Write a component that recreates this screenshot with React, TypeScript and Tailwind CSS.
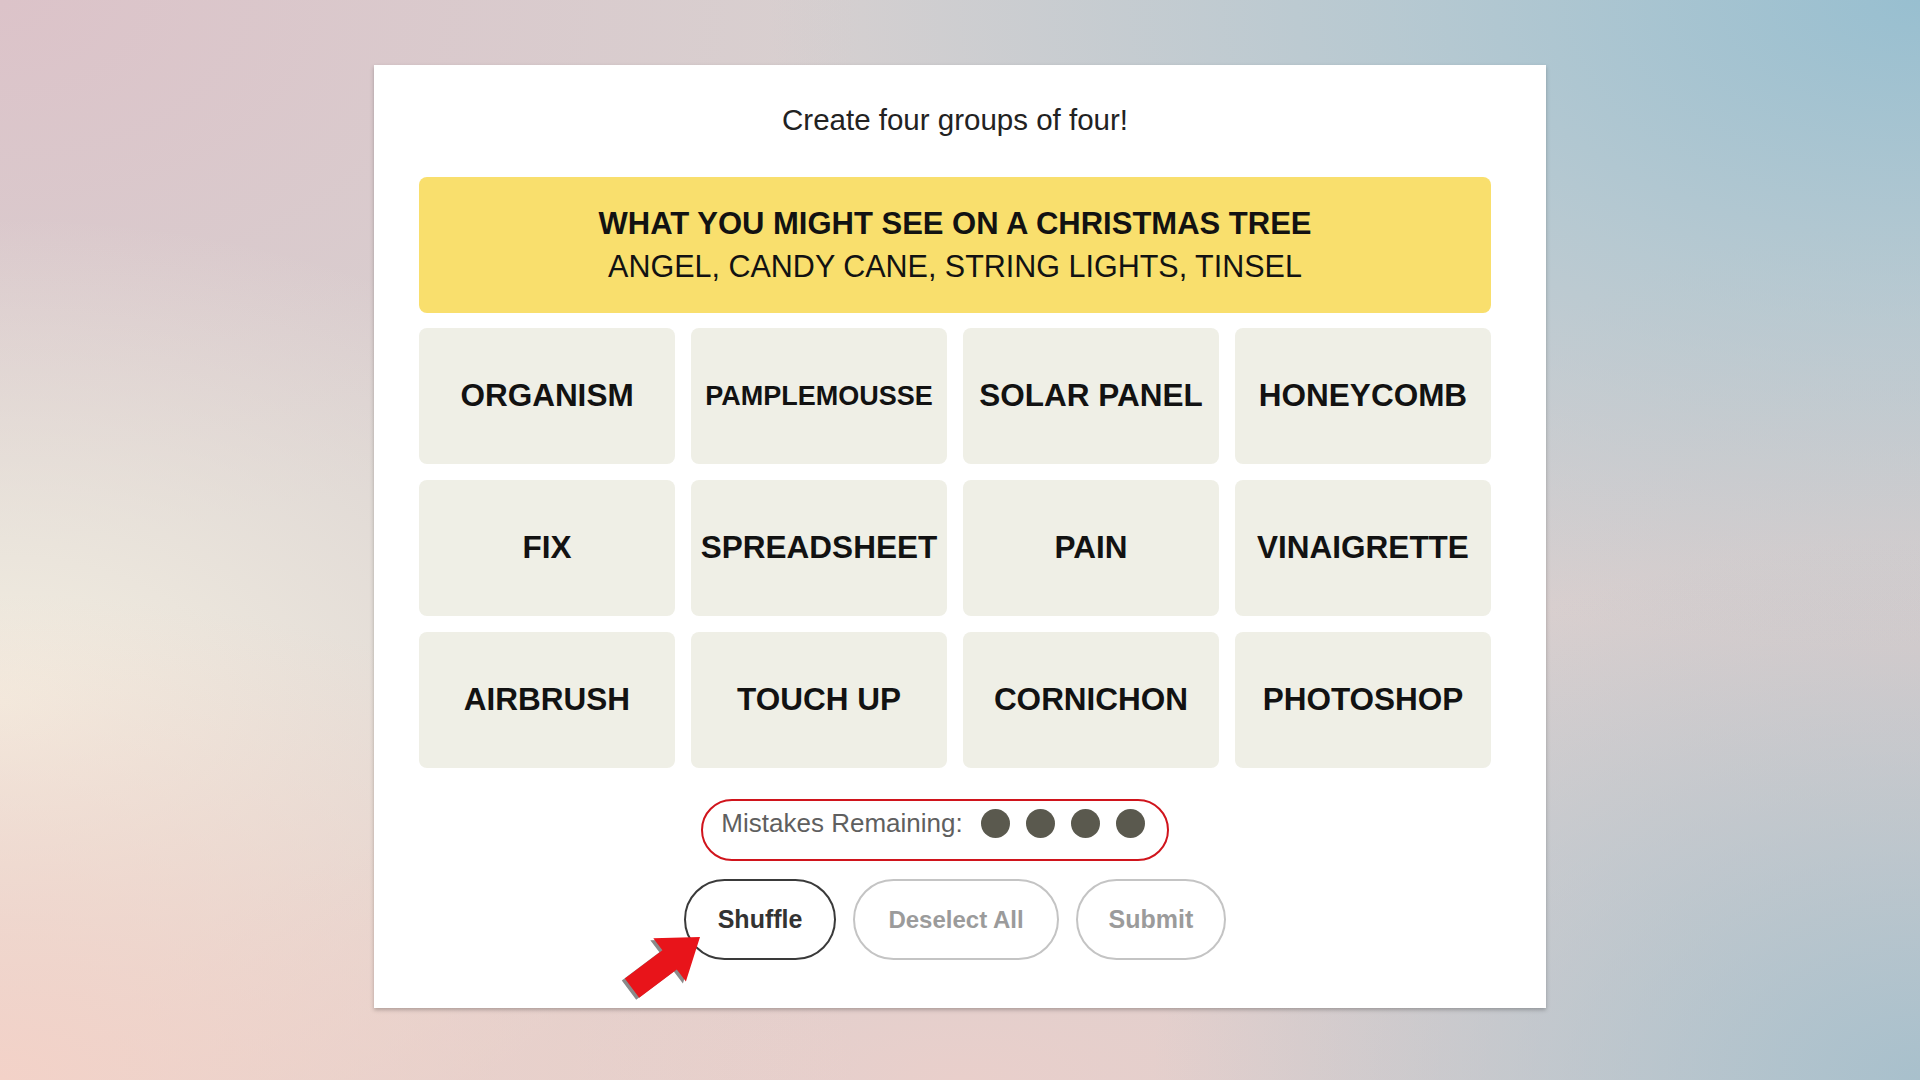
import React from "react";

const rows: { text: string; small?: boolean }[][] = [
  [{ text: "ORGANISM" }, { text: "PAMPLEMOUSSE", small: true }, { text: "SOLAR PANEL" }, { text: "HONEYCOMB" }],
  [{ text: "FIX" }, { text: "SPREADSHEET" }, { text: "PAIN" }, { text: "VINAIGRETTE" }],
  [{ text: "AIRBRUSH" }, { text: "TOUCH UP" }, { text: "CORNICHON" }, { text: "PHOTOSHOP" }],
];

function Arrow() {
  const pts = "85,12 70.9,56.5 61.8,44.5 24.2,72.8 9.8,53.6 47.4,25.3 38.3,13.3";
  return (
    <svg
      className="absolute left-[615px] top-[925px]"
      width="95"
      height="85"
      viewBox="0 0 95 85"
    >
      <polygon points={pts} fill="#8a8a8a" transform="translate(-3,2)" />
      <polygon points={pts} fill="#e8141a" />
    </svg>
  );
}

export default function App() {
  return (
    <div
      className="relative w-[1920px] h-[1080px] overflow-hidden flex justify-center pt-[65px] bg-[#d8d0d0] bg-[radial-gradient(ellipse_60%_60%_at_100%_0%,#98bfd0_0%,rgba(160,196,210,0.6)_45%,rgba(160,196,210,0)_100%),radial-gradient(ellipse_40%_50%_at_100%_100%,#a8c0cc_0%,rgba(168,192,204,0)_100%),radial-gradient(ellipse_45%_45%_at_0%_100%,#f3d2c8_0%,rgba(243,210,200,0)_100%),radial-gradient(ellipse_45%_30%_at_50%_100%,#e9cfcb_0%,rgba(233,207,203,0)_100%),radial-gradient(ellipse_40%_45%_at_0%_65%,#f3eee1_0%,rgba(243,238,225,0)_100%),radial-gradient(ellipse_45%_50%_at_0%_0%,#dcc3c9_0%,rgba(220,195,201,0)_100%),radial-gradient(ellipse_30%_40%_at_100%_60%,#dacdcc_0%,rgba(218,205,204,0)_100%)]"
      style={{ fontFamily: '"Liberation Sans", Arial, sans-serif' }}
    >
      <div className="w-[1172px] h-[943px] bg-white shadow-[0_2px_4px_rgba(0,0,0,0.25)] flex flex-col items-center pt-[37px] pr-[10px]">
        <div className="h-[36px] leading-[36px] text-[29.5px] text-[#222222]">
          Create four groups of four!
        </div>

        <div className="mt-[39px] w-[1072px] h-[136px] rounded-[8px] bg-[#f9df6d] flex flex-col items-center justify-center">
          <div className="text-[31px] leading-[43px] font-bold text-[#121212]">
            WHAT YOU MIGHT SEE ON A CHRISTMAS TREE
          </div>
          <div className="text-[30.5px] leading-[43px] text-[#121212]">
            ANGEL, CANDY CANE, STRING LIGHTS, TINSEL
          </div>
        </div>

        <div className="mt-[15px] w-[1072px] grid grid-cols-4 gap-[16px]">
          {rows.flat().map((t) => (
            <div
              key={t.text}
              className="h-[136px] rounded-[8px] bg-[#efefe6] flex items-center justify-center"
            >
              <span
                className={
                  t.small
                    ? "text-[27px] font-bold text-[#121212]"
                    : "text-[31.5px] font-bold text-[#121212]"
                }
              >
                {t.text}
              </span>
            </div>
          ))}
        </div>

        <div className="mt-[31px] mr-[40px] h-[62px] rounded-full border-2 border-[#d0141c] pl-[18px] pr-[22px] pt-[8px] flex items-start">
          <div className="h-[29px] flex items-center">
            <span className="text-[26px] leading-[29px] text-[#5f5f5f]">
              Mistakes Remaining:
            </span>
            <div className="ml-[18px] flex gap-[16px]">
              <span className="w-[29px] h-[29px] rounded-full bg-[#5a594e]" />
              <span className="w-[29px] h-[29px] rounded-full bg-[#5a594e]" />
              <span className="w-[29px] h-[29px] rounded-full bg-[#5a594e]" />
              <span className="w-[29px] h-[29px] rounded-full bg-[#5a594e]" />
            </div>
          </div>
        </div>

        <div className="mt-[18px] flex gap-[17px]">
          <button className="h-[81px] px-[32px] rounded-full border-2 border-[#3a3a3a] bg-white text-[25px] font-bold text-[#333333]">
            Shuffle
          </button>
          <button className="h-[81px] px-[33px] rounded-full border-2 border-[#c4c4c4] bg-white text-[24px] font-bold text-[#9b9b9b]">
            Deselect All
          </button>
          <button className="h-[81px] px-[31px] rounded-full border-2 border-[#c4c4c4] bg-white text-[25px] font-bold text-[#9b9b9b]">
            Submit
          </button>
        </div>
      </div>
      <Arrow />
    </div>
  );
}
